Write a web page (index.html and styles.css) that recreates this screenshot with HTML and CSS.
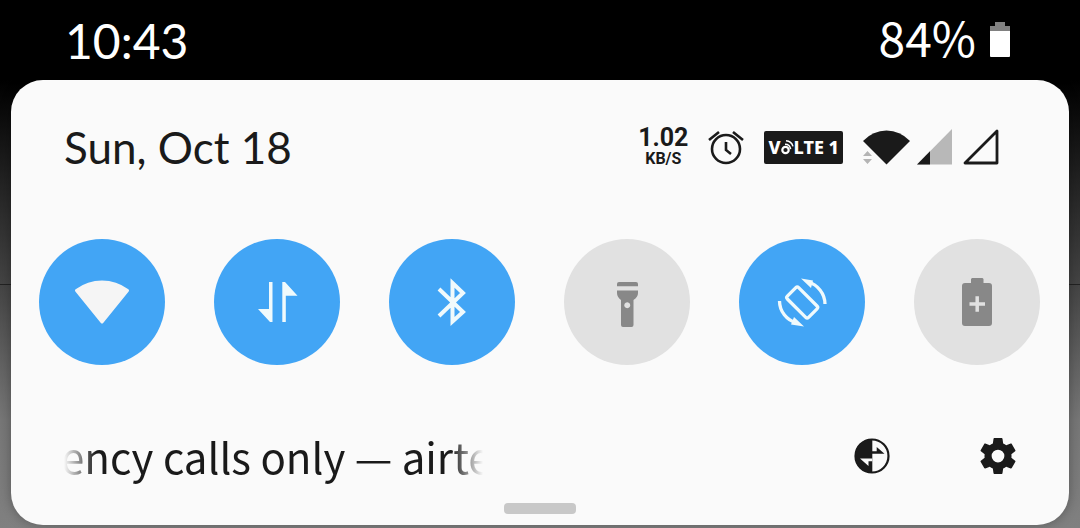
FILE: index.html
```
<!DOCTYPE html>
<html lang="en">
<head>
    <meta charset="UTF-8">
    <meta name="viewport" content="width=device-width, initial-scale=1.0">
    <title>Quick Settings</title>
    <link rel="stylesheet" href="styles.css">
</head>
<body>
    <!-- Status bar -->
    <header class="status-bar">
        <time class="clock">10:43</time>
        <div class="battery">
            <span class="percent">84%</span>
            <svg width="20" height="36" viewBox="0 0 20 36">
                <path fill="#808080" d="M5 0h10v4h5v6H0V4h5z"/>
                <path fill="#fff" d="M0 9h20v25a1 1 0 0 1-1 1H1a1 1 0 0 1-1-1z"/>
            </svg>
        </div>
    </header>

    <main class="panel">
        <div class="panel-header">
            <time class="date">Sun, Oct 18</time>
            <div class="indicators">
                <div class="speed">
                    <span class="speed-value">1.02</span>
                    <span class="speed-unit">KB/S</span>
                </div>
                <svg width="36" height="36" viewBox="0 0 36 36" fill="none" stroke="#1a1a1a" stroke-width="2.6">
                    <circle cx="18" cy="20" r="14"/>
                    <path d="M18 13v8l5 4M1 11l10-8M25 3l10 8"/>
                </svg>
                <div class="volte">
                    <span>V</span>
                    <svg width="13" height="16" viewBox="0 0 13 16" fill="none" stroke="#fff">
                        <circle cx="4.5" cy="11" r="3.2" stroke-width="2.2"/>
                        <path stroke-width="1.5" d="M4 5.2q5 0 5.6 5M5 1.8q5.5.4 7 5.6"/>
                    </svg>
                    <span>LTE 1</span>
                </div>
                <div class="signals">
                    <svg width="47" height="36" viewBox="0 0 47 36">
                        <path fill="#1a1a1a" d="M23.5 35.5L0 12Q10 1.5 23.5 1.5T47 12z"/>
                        <path fill="#b4b4b4" d="M0 27l4.5-5 4.5 5zM0 30h9l-4.5 5z"/>
                    </svg>
                    <svg width="35" height="36" viewBox="0 0 35 36">
                        <path fill="#b8b8b8" d="M35 0v35.5H0z"/>
                        <path fill="#1a1a1a" d="M13 22.3v13.2H0z"/>
                    </svg>
                    <svg class="sim-two" width="36" height="36" viewBox="0 0 36 36">
                        <path fill="none" stroke="#1a1a1a" stroke-width="2.8" stroke-linejoin="round" d="M34 2v32H2z"/>
                    </svg>
                </div>
            </div>
        </div>

        <!-- Tiles -->
        <div class="tiles">
            <button class="tile on" aria-label="Wi-Fi">
                <svg viewBox="0 0 126 126">
                    <path fill="#f5f5f5" stroke="#f5f5f5" stroke-width="3" stroke-linejoin="round" d="M63 83L37.5 51.5Q49 43 63 43t25.5 8.5z"/>
                </svg>
            </button>
            <button class="tile on" aria-label="Mobile data">
                <svg viewBox="0 0 126 126">
                    <path fill="#f0fafc" d="M55 43h3.5v40H56L44 70h11zM68.3 83V43H71l12.5 13.7H71.8V83z"/>
                </svg>
            </button>
            <button class="tile on" aria-label="Bluetooth">
                <svg viewBox="0 0 126 126">
                    <path fill="none" stroke="#f0fafc" stroke-width="4" d="M50 50l24 23-10.5 9.5V44L74 54 50 77"/>
                </svg>
            </button>
            <button class="tile" aria-label="Flashlight">
                <svg viewBox="0 0 126 126">
                    <path fill="#888" d="M53 47.3V45q0-2 2-2h17q2 0 2 2v2.3z"/>
                    <path fill="#888" fill-rule="evenodd" d="M53 51.5h21V54q0 4-4.5 7v25q0 2-2 2H59q-2 0-2-2V61q-4-3-4-7zM63.2 63.3a3 3 0 1 0 .1 0z"/>
                </svg>
            </button>
            <button class="tile on" aria-label="Auto-rotate">
                <svg viewBox="0 0 126 126">
                    <g fill="none" stroke="#f0fafc" stroke-width="3.3">
                        <rect x="55.2" y="48.5" width="16" height="30" rx="2" transform="rotate(-45 63.2 63.5)"/>
                        <path d="M86 65a23 23 0 0 0-17-22M40.5 62a23 23 0 0 0 17 22"/>
                    </g>
                    <path fill="#f0fafc" d="M62 39.5l10 9.5 2-7.5zM65 87.5L55 78l-3 7.5z"/>
                </svg>
            </button>
            <button class="tile" aria-label="Battery saver">
                <svg viewBox="0 0 126 126">
                    <path fill="#888" d="M58 39h10.5l1 1v4H75q3 0 3 3v37q0 3-3 3H51q-3 0-3-3V47q0-3 3-3h6v-4z"/>
                    <path stroke="#e1e1e1" stroke-width="3.5" d="M55.5 65H71M63.2 57.3v15.5"/>
                </svg>
            </button>
        </div>

        <div class="panel-footer">
            <div class="carrier">ency calls only — airte</div>
            <div class="actions">
                <button class="action" aria-label="Data usage">
                    <svg viewBox="0 0 36 36">
                        <circle cx="18" cy="18" r="16.5" fill="none" stroke="#1a1a1a" stroke-width="2.2"/>
                        <path fill="#1a1a1a" d="M18.3 1v34a17 17 0 0 1 0-34z"/>
                        <path fill="#fafafa" d="M6 20.5h12.3v2.8h-3.8V28z"/>
                        <path fill="#1a1a1a" d="M18 15.7h12.5L22.7 9v4.2H18z"/>
                    </svg>
                </button>
                <button class="action" aria-label="Settings">
                    <svg viewBox="2.4 2.4 19.2 19.2">
                        <path fill="#1a1a1a" d="M19.14 12.94c.04-.3.06-.61.06-.94 0-.32-.02-.64-.07-.94l2.03-1.58c.18-.14.23-.41.12-.61l-1.92-3.32c-.12-.22-.37-.29-.59-.22l-2.39.96c-.5-.38-1.03-.7-1.62-.94l-.36-2.54c-.04-.24-.24-.41-.48-.41h-3.84c-.24 0-.43.17-.47.41l-.36 2.54c-.59.24-1.13.57-1.62.94l-2.39-.96c-.22-.08-.47 0-.59.22L2.74 8.87c-.12.21-.08.47.12.61l2.03 1.58c-.05.3-.09.63-.09.94s.02.64.07.94l-2.03 1.58c-.18.14-.23.41-.12.61l1.92 3.32c.12.22.37.29.59.22l2.39-.96c.5.38 1.03.7 1.62.94l.36 2.54c.05.24.24.41.48.41h3.84c.24 0 .44-.17.47-.41l.36-2.54c.59-.24 1.13-.56 1.62-.94l2.39.96c.22.08.47 0 .59-.22l1.92-3.32c.12-.22.07-.47-.12-.61l-2.01-1.58zM12 15.4a3.4 3.4 0 1 1 0-6.8 3.4 3.4 0 0 1 0 6.8z"/>
                    </svg>
                </button>
            </div>
        </div>

        <div class="handle"></div>
    </main>
</body>
</html>
```

FILE: styles.css
```
* {
    box-sizing: border-box;
}

body {
    margin: 0;
    min-height: 100vh;
    font-family: 'Noto Sans CJK SC', 'Noto Sans', sans-serif;
    color: #1a1a1a;
    background:
        linear-gradient(#222, #222) 0 284px / 100% 1px no-repeat,
        linear-gradient(#000 80px, #222 180px, #444 284px, #777 420px, #808080 528px);
}

svg {
    display: block;
}

button {
    padding: 0;
    border: none;
    background: none;
    cursor: pointer;
}

.status-bar {
    display: flex;
    justify-content: space-between;
    align-items: center;
    height: 80px;
    padding: 0 70px 0 65px;
    font-size: 48px;
    color: #fff;
    background-color: #000;
}

.clock,
.date {
    font-family: Lato, sans-serif;
}

.battery {
    display: flex;
    align-items: center;
    gap: 14px;
}

.percent {
    padding-bottom: 8px;
    line-height: 48px;
}

.panel {
    margin: 0 11px;
    padding: 35px 0 11px;
    border-radius: 32px;
    background-color: #fafafa;
    box-shadow: 0 0 12px rgba(0, 0, 0, 0.3);
}

.panel-header,
.panel-footer {
    display: flex;
    justify-content: space-between;
    align-items: center;
    height: 64px;
    padding: 0 53px;
}

.panel-header {
    padding-right: 70px;
}

.date {
    font-size: 44px;
}

.indicators {
    display: flex;
    align-items: center;
    gap: 20px;
}

.speed {
    display: flex;
    flex-direction: column;
    align-items: center;
    font-family: Roboto, sans-serif;
    font-weight: 700;
}

.speed-value {
    font-size: 25px;
    line-height: 24px;
}

.speed-unit {
    font-size: 16px;
    line-height: 18px;
}

.volte {
    display: flex;
    align-items: center;
    height: 33px;
    padding: 0 4px;
    border-radius: 2px;
    font-family: 'Noto Sans', sans-serif;
    font-size: 18px;
    font-weight: 800;
    color: #fff;
    background-color: #1a1a1a;
}

.signals {
    display: flex;
    gap: 7px;
}

.sim-two {
    margin-left: 4px;
}

.tiles {
    display: flex;
    justify-content: space-between;
    margin: 60px 0 59px;
    padding: 0 29px 0 28px;
}

.tile {
    width: 126px;
    height: 126px;
    border-radius: 50%;
    background-color: #e1e1e1;
}

.tile.on {
    background-color: #42a5f5;
}

.carrier {
    width: 419px;
    overflow: hidden;
    font-size: 42px;
    line-height: 64px;
    white-space: nowrap;
    text-indent: -3px;
    -webkit-mask-image: linear-gradient(to right, transparent, #000 32px, #000 calc(100% - 32px), transparent);
    mask-image: linear-gradient(to right, transparent, #000 32px, #000 calc(100% - 32px), transparent);
}

.actions {
    display: flex;
    gap: 90px;
}

.action {
    width: 36px;
    height: 36px;
}

.handle {
    width: 72px;
    height: 11px;
    margin: 15px auto 0;
    border-radius: 4px;
    background-color: #c8c8c8;
}
```
